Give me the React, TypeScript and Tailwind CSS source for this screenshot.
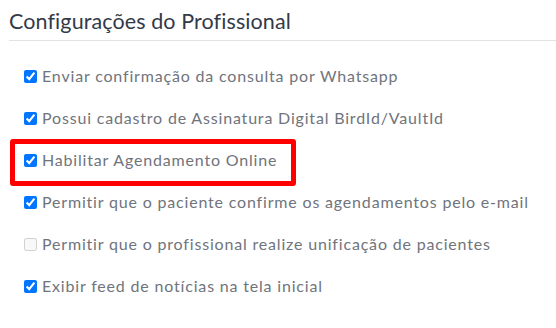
import React from "react";

const items: { label: string; checked: boolean; disabled?: boolean; highlight?: boolean }[] = [
  { label: "Enviar confirmação da consulta por Whatsapp", checked: true },
  { label: "Possui cadastro de Assinatura Digital BirdId/VaultId", checked: true },
  { label: "Habilitar Agendamento Online", checked: true, highlight: true },
  { label: "Permitir que o paciente confirme os agendamentos pelo e-mail", checked: true },
  { label: "Permitir que o profissional realize unificação de pacientes", checked: false, disabled: true },
  { label: "Exibir feed de notícias na tela inicial", checked: true },
];

export default function App() {
  return (
    <div className="w-[556px] h-[328px] bg-white pl-[9px] font-['Lato',sans-serif] overflow-hidden">
      <div className="h-[41px] border-b border-[#e3e3e3] flex items-end">
        <h1 className="text-[21.5px] leading-none pb-[8px] text-[#333a48] tracking-[0.1px]">
          Configurações do Profissional
        </h1>
      </div>
      <div className="mt-[14px] flex flex-col">
        {items.map((it, i) => (
          <div key={i} className="relative h-[42px] flex items-center pl-[15px]">
            {it.highlight && (
              <div className="absolute left-[1px] top-0 w-[286px] h-[47px] border-[5px] border-[#ff0000] rounded-[3px] pointer-events-none" />
            )}
            <input
              type="checkbox"
              defaultChecked={it.checked}
              disabled={it.disabled}
              className="m-0 w-[13px] h-[13px] shrink-0"
            />
            <span className="ml-[5px] text-[16px] leading-none text-[#70747c] tracking-[0.82px] whitespace-nowrap">
              {it.label}
            </span>
          </div>
        ))}
      </div>
    </div>
  );
}
